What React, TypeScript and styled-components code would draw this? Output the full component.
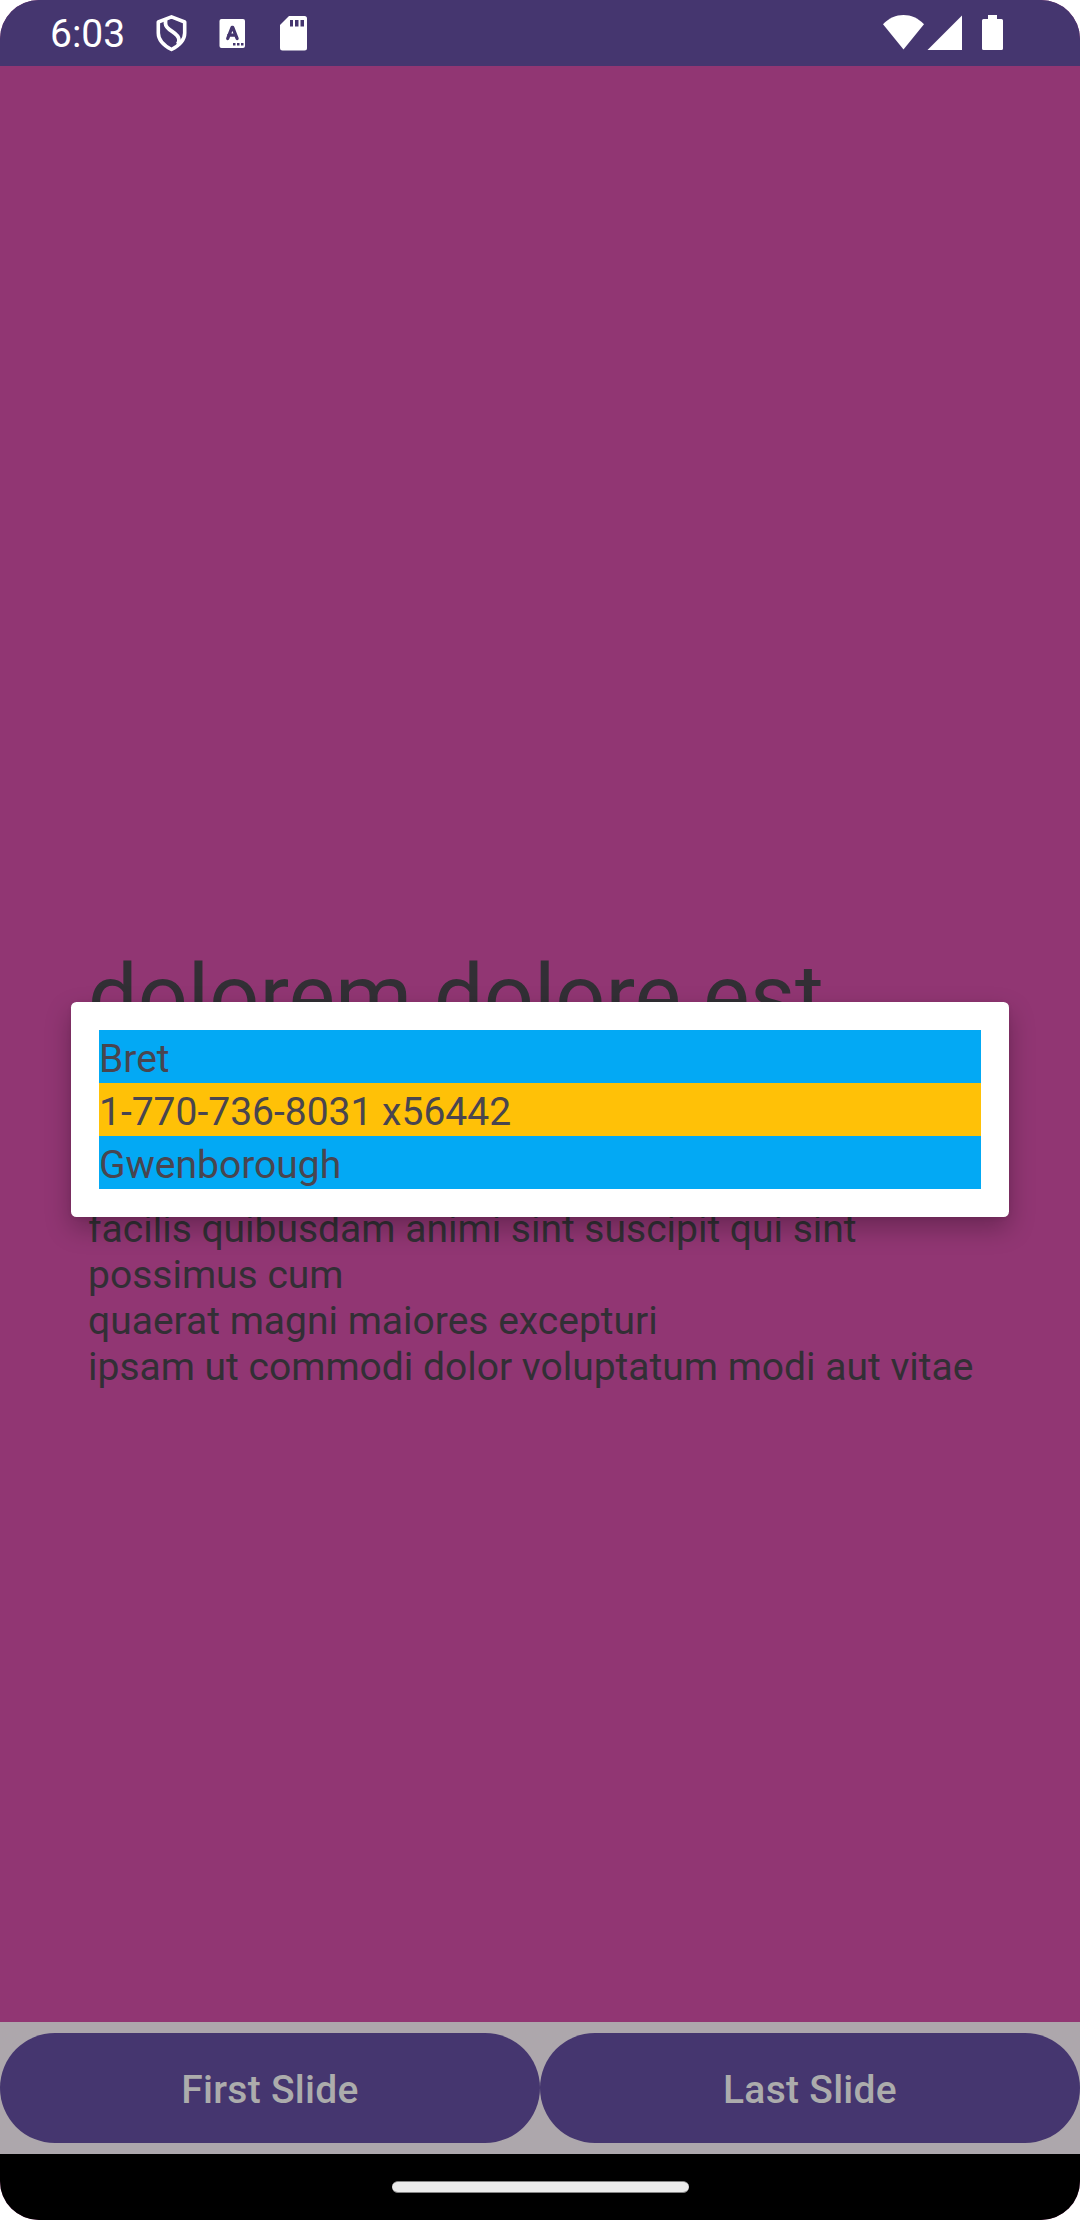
import React from "react";
import styled, { createGlobalStyle } from "styled-components";

const GlobalStyle = createGlobalStyle`
  * { box-sizing: border-box; }
  body { margin: 0; background: #fff; }
`;

const Screen = styled.div`
  position: relative;
  display: flex;
  flex-direction: column;
  width: 1080px;
  height: 2220px;
  overflow: hidden;
  border-radius: 39px;
  background: #913673;
  font-family: Roboto, sans-serif;
`;

const StatusBar = styled.header`
  display: flex;
  align-items: center;
  justify-content: space-between;
  height: 66px;
  padding: 0 76px 0 50px;
  background: #45366f;
  color: #fff;
`;

const StatusGroup = styled.div`
  display: flex;
  align-items: center;
  height: 66px;
`;

const Clock = styled.span`
  width: 106px;
  padding-top: 2px;
  font-size: 39px;
  line-height: 46px;
`;

const Slide = styled.main`
  flex: 1;
  padding: 878px 88px 0;
  color: #322f35;
`;

const Title = styled.h1`
  margin: 0;
  height: 262px;
  font-size: 88px;
  font-weight: 400;
  line-height: 103px;
  white-space: nowrap;
`;

const Body = styled.p`
  margin: 0;
  font-size: 39px;
  line-height: 46px;
  white-space: pre;
`;

const Actions = styled.footer`
  display: flex;
  height: 132px;
  padding: 11px 0;
  background: #ada7ac;
`;

const PillButton = styled.button`
  flex: 1;
  height: 110px;
  padding: 4px 0 0;
  border: 0;
  border-radius: 55px;
  background: #45366f;
  color: #acacac;
  font-family: inherit;
  font-size: 39px;
  font-weight: 500;
  letter-spacing: 0.28px;
`;

const NavBar = styled.nav`
  display: flex;
  justify-content: center;
  height: 66px;
  padding-top: 27px;
  background: #000;
`;

const Handle = styled.div`
  width: 297px;
  height: 12px;
  border-radius: 6px;
  border: 1px solid #848484;
  border-width: 1px 0;
  background: #ebebeb;
`;

const Dialog = styled.section`
  position: absolute;
  top: 1002px;
  left: 71px;
  width: 938px;
  padding: 28px;
  border-radius: 5.5px;
  background: #fff;
  box-shadow: 0 11px 26px rgba(0, 0, 0, 0.27), 0 1px 4px rgba(0, 0, 0, 0.08);
`;

const DialogRow = styled.div<{ $tone: string }>`
  height: 53px;
  padding-top: 6px;
  background: ${(p) => p.$tone};
  color: #49454f;
  font-size: 39px;
  line-height: 46px;
`;

const rows = [
  { text: "Bret", tone: "#03a9f4" },
  { text: "1-770-736-8031 x56442", tone: "#ffc107" },
  { text: "Gwenborough", tone: "#03a9f4" },
];

const lines = [
  "facilis quibusdam animi sint suscipit qui sint",
  "possimus cum",
  "quaerat magni maiores excepturi",
  "ipsam ut commodi dolor voluptatum modi aut vitae",
];

const NotificationIcons = () => (
  <svg width="152" height="66" viewBox="156 0 152 66">
    <path
      d="M171.500 16.800 158.300 22v11c0 7.500 5.500 12.500 13.200 16.500 7.700-4 13.200-9 13.200-16.500V22z"
      fill="none" stroke="#fff" strokeWidth="3.600" strokeLinejoin="round"
    />
    <path
      d="M165.500 19v4.500c0 7.500 13.500 8.500 13.500 16.500 0 1.500-.5 3-1.500 4.200"
      fill="none" stroke="#fff" strokeWidth="3.800"
    />
    <path
      d="M221.500 19h21.500a2 2 0 0 1 2 2v25a2 2 0 0 1-2 2h-21.500a2 2 0 0 1-2-2V21a2 2 0 0 1 2-2z"
      fill="#fff"
    />
    <path
      d="m227.700 38.500 4.300-11h.8l4.300 11m-8.500-3.300h7"
      fill="none" stroke="#45366f" strokeWidth="3.300" strokeLinecap="round" strokeLinejoin="round"
    />
    <path d="M233 43h2.500v2.500H233zm4 0h2.500v2.500H237zm4 0h2.500v2.500H241z" fill="#45366f" />
    <path
      d="M289 16h15.500a2.500 2.500 0 0 1 2.500 2.500v29.500a2.500 2.500 0 0 1-2.500 2.500h-22a2.500 2.500 0 0 1-2.500-2.500V25z"
      fill="#fff"
    />
    <path d="M290 20h3v6.500h-3zm5 0h3.500v6.500H295zm5.500 0h3.500v6.500h-3.500z" fill="#45366f" />
  </svg>
);

const SystemIcons = () => (
  <svg width="122" height="66" viewBox="882 0 122 66">
    <path d="M883 24.300C889 18 896 15 903.500 15S918 18 924 24.300L903.500 49.500z" fill="#fff" />
    <path d="M962 15.500V50H927.500z" fill="#fff" />
    <path
      d="M988 15h9v4h4.500a1.500 1.500 0 0 1 1.500 1.500v28a1.500 1.500 0 0 1-1.500 1.500h-18a1.500 1.500 0 0 1-1.500-1.500v-28a1.500 1.500 0 0 1 1.500-1.500h4.500z"
      fill="#fff"
    />
  </svg>
);

export default function App() {
  return (
    <>
      <GlobalStyle />
      <Screen>
        <StatusBar>
          <StatusGroup>
            <Clock>6:03</Clock>
            <NotificationIcons />
          </StatusGroup>
          <StatusGroup>
            <SystemIcons />
          </StatusGroup>
        </StatusBar>
        <Slide>
          <Title>dolorem dolore est</Title>
          <Body>{lines.join("\n")}</Body>
        </Slide>
        <Actions>
          <PillButton>First Slide</PillButton>
          <PillButton>Last Slide</PillButton>
        </Actions>
        <NavBar>
          <Handle />
        </NavBar>
        <Dialog>
          {rows.map((row) => (
            <DialogRow key={row.text} $tone={row.tone}>{row.text}</DialogRow>
          ))}
        </Dialog>
      </Screen>
    </>
  );
}
